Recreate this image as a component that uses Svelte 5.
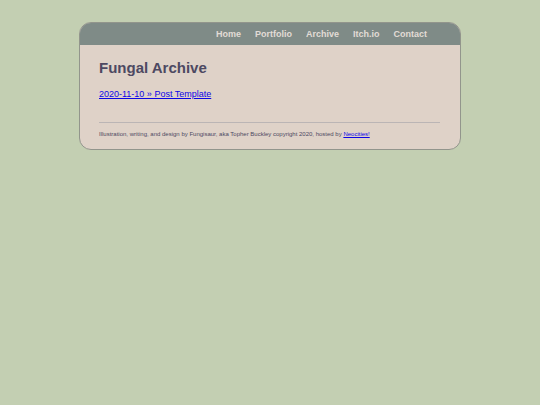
<script lang="ts">
  interface Link {
    label: string
    href: string
  }

  const links: Link[] = [
    { label: 'Home', href: '#home' },
    { label: 'Portfolio', href: '#portfolio' },
    { label: 'Archive', href: '#archive' },
    { label: 'Itch.io', href: '#itch' },
    { label: 'Contact', href: '#contact' }
  ]

  const posts: Link[] = [{ label: '2020-11-10 » Post Template', href: '#post-template' }]
</script>

<div class="container">
  <header>
    <nav>
      <ul>
        {#each links as link}
          <li><a href={link.href}>{link.label}</a></li>
        {/each}
      </ul>
    </nav>
  </header>

  <main>
    <h1>Fungal Archive</h1>
    <ul class="posts">
      {#each posts as post}
        <li><a href={post.href}>{post.label}</a></li>
      {/each}
    </ul>
  </main>

  <footer>
    <p>
      Illustration, writing, and design by Fungisaur, aka Topher Buckley copyright 2020, hosted by
      <a href="#neocities">Neocities!</a>
    </p>
  </footer>
</div>

<style>
  :global(body) {
    background: #c3cfb2;
    color: #4d4962;
    font-family: 'Liberation Sans', Arial, sans-serif;
    font-size: 9px;
    line-height: 14px;
  }

  .container {
    box-sizing: border-box;
    max-width: 382px;
    margin: 22px auto;
    overflow: hidden;
    background: #dfd2c8;
    border: 1px solid #92958c;
    border-radius: 12px;
  }

  ul {
    margin: 0;
    padding: 0;
    list-style: none;
  }

  header {
    padding: 4px 33px 4px 20px;
    background: #7f8b87;
  }

  nav ul {
    display: flex;
    flex-wrap: wrap;
    justify-content: flex-end;
    column-gap: 14px;
  }

  nav a {
    color: #e2dcd6;
    font-weight: bold;
    text-decoration: none;
  }

  main {
    padding: 14px 19px 0;
  }

  h1 {
    margin: 0 0 10px;
    font-size: 15px;
    line-height: 18px;
  }

  .posts a,
  footer a {
    color: #0d05e6;
  }

  footer {
    margin: 21px 20px 0 19px;
    padding: 4px 0 8px;
    border-top: 1px solid #bbb5b5;
    font-size: 6px;
  }

  footer p {
    margin: 0;
  }
</style>
